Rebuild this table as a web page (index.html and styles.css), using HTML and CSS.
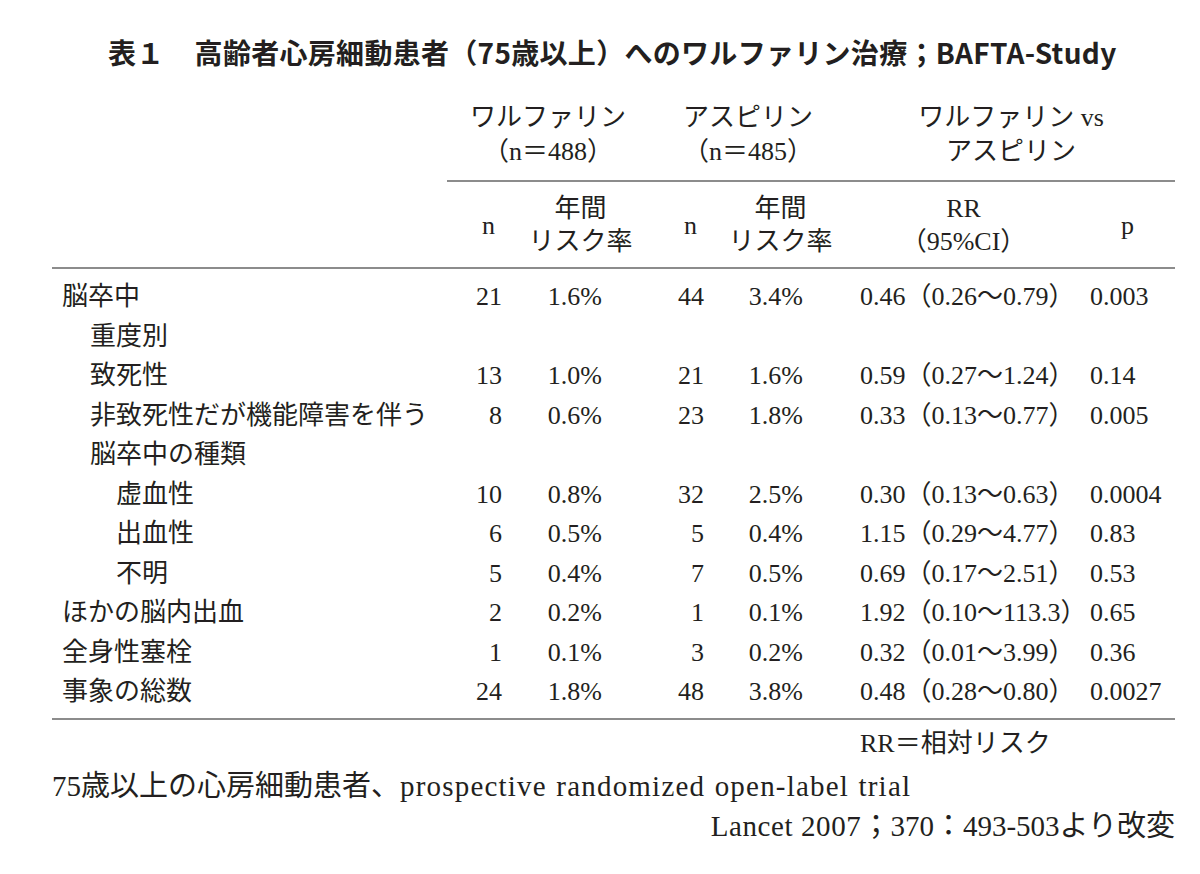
FILE: index.html
```html
<!DOCTYPE html>
<html lang="ja">
<head>
<meta charset="utf-8">
<title>表1 BAFTA-Study</title>
<link rel="stylesheet" href="styles.css">
</head>
<body>
<div class="page">
  <h1 class="title"><span class="tno">表１</span>高齢者心房細動患者（75歳以上）へのワルファリン治療；BAFTA-Study</h1>
  <table class="tbl">
    <colgroup>
      <col class="c-label">
      <col class="c-n1">
      <col class="c-r1">
      <col class="c-n2">
      <col class="c-r2">
      <col class="c-rr">
      <col class="c-p">
    </colgroup>
    <thead>
      <tr class="grp">
        <th class="blank"></th>
        <th colspan="2" class="g">ワルファリン<br>（n＝488）</th>
        <th colspan="2" class="g">アスピリン<br>（n＝485）</th>
        <th colspan="2" class="g">ワルファリン vs<br>アスピリン</th>
      </tr>
      <tr class="sub">
        <th></th>
        <th class="hn">n</th>
        <th class="hc">年間<br>リスク率</th>
        <th class="hn">n</th>
        <th class="hc">年間<br>リスク率</th>
        <th class="hrr">RR<br>（95%CI）</th>
        <th class="hp">p</th>
      </tr>
    </thead>
    <tbody>
      <tr class="first"><td class="l0">脳卒中</td><td class="n">21</td><td class="r">1.6%</td><td class="n">44</td><td class="r2">3.4%</td><td class="rr">0.46（0.26〜0.79）</td><td class="p">0.003</td></tr>
      <tr><td class="l1">重度別</td><td></td><td></td><td></td><td></td><td></td><td></td></tr>
      <tr><td class="l1">致死性</td><td class="n">13</td><td class="r">1.0%</td><td class="n">21</td><td class="r2">1.6%</td><td class="rr">0.59（0.27〜1.24）</td><td class="p">0.14</td></tr>
      <tr><td class="l1">非致死性だが機能障害を伴う</td><td class="n">8</td><td class="r">0.6%</td><td class="n">23</td><td class="r2">1.8%</td><td class="rr">0.33（0.13〜0.77）</td><td class="p">0.005</td></tr>
      <tr><td class="l1">脳卒中の種類</td><td></td><td></td><td></td><td></td><td></td><td></td></tr>
      <tr><td class="l2">虚血性</td><td class="n">10</td><td class="r">0.8%</td><td class="n">32</td><td class="r2">2.5%</td><td class="rr">0.30（0.13〜0.63）</td><td class="p">0.0004</td></tr>
      <tr><td class="l2">出血性</td><td class="n">6</td><td class="r">0.5%</td><td class="n">5</td><td class="r2">0.4%</td><td class="rr">1.15（0.29〜4.77）</td><td class="p">0.83</td></tr>
      <tr><td class="l2">不明</td><td class="n">5</td><td class="r">0.4%</td><td class="n">7</td><td class="r2">0.5%</td><td class="rr">0.69（0.17〜2.51）</td><td class="p">0.53</td></tr>
      <tr><td class="l0">ほかの脳内出血</td><td class="n">2</td><td class="r">0.2%</td><td class="n">1</td><td class="r2">0.1%</td><td class="rr">1.92（0.10〜113.3）</td><td class="p">0.65</td></tr>
      <tr><td class="l0">全身性塞栓</td><td class="n">1</td><td class="r">0.1%</td><td class="n">3</td><td class="r2">0.2%</td><td class="rr">0.32（0.01〜3.99）</td><td class="p">0.36</td></tr>
      <tr class="last"><td class="l0">事象の総数</td><td class="n">24</td><td class="r">1.8%</td><td class="n">48</td><td class="r2">3.8%</td><td class="rr">0.48（0.28〜0.80）</td><td class="p">0.0027</td></tr>
    </tbody>
    <tfoot>
      <tr><td colspan="5"></td><td colspan="2" class="note">RR＝相対リスク</td></tr>
    </tfoot>
  </table>
  <p class="foot1">75歳以上の心房細動患者、<span class="lat">prospective randomized open-label trial</span></p>
  <p class="foot2"><span class="lat2">Lancet 2007</span>；370：493-503より改変</p>
</div>
</body>
</html>
```
FILE: styles.css
```css
html, body {
  margin: 0;
  padding: 0;
  background: #ffffff;
}

.page {
  width: 1123px;
  padding: 32px 0 0 52px;
  color: #231f20;
  font-family: "Liberation Serif", "Noto Sans CJK JP", serif;
  font-size: 26px;
  font-weight: 400;
}

.title {
  margin: 0 0 0 56px;
  font-family: "Noto Sans CJK JP", sans-serif;
  font-weight: 700;
  font-size: 28px;
  line-height: 40px;
  white-space: nowrap;
  letter-spacing: 0.3px;
}

.tno {
  margin-right: 30px;
}

.tbl {
  margin-top: 29px;
  width: 1123px;
  border-collapse: collapse;
  table-layout: fixed;
}

.c-label { width: 395px; }
.c-n1 { width: 65px; }
.c-r1 { width: 137px; }
.c-n2 { width: 65px; }
.c-r2 { width: 133px; }
.c-rr { width: 233px; }
.c-p { width: 95px; }

.tbl th {
  font-weight: 400;
  padding: 0;
}

.grp th {
  line-height: 34px;
  padding-bottom: 11px;
  text-align: center;
  vertical-align: bottom;
}

.grp th.g {
  border-bottom: 2px solid #8c8c8c;
}

.sub th {
  line-height: 33px;
  padding-top: 10px;
  padding-bottom: 9px;
  border-bottom: 2px solid #8c8c8c;
  vertical-align: middle;
}

.sub th.hn {
  text-align: right;
  padding-right: 17px;
}

.sub th.hc,
.sub th.hrr,
.sub th.hp {
  text-align: center;
}

.tbl td {
  padding: 0;
  line-height: 39.5px;
  white-space: nowrap;
}

.tbl tr.first td {
  padding-top: 8px;
}

.tbl tr.last td {
  padding-bottom: 6px;
  border-bottom: 2px solid #8c8c8c;
}

.tbl td.l0 { padding-left: 10px; }
.tbl td.l1 { padding-left: 38px; }
.tbl td.l2 { padding-left: 64px; }

.tbl td.n {
  text-align: right;
  padding-right: 10px;
}

.tbl td.r {
  text-align: right;
  padding-right: 47px;
}

.tbl td.r2 {
  text-align: right;
  padding-right: 44px;
}

.tbl td.rr {
  padding-left: 13px;
}

.tbl td.p {
  padding-left: 10px;
}

.tbl tfoot td {
  line-height: 40px;
  padding-top: 4px;
}

.tbl td.note {
  padding-left: 13px;
}

.lat {
  letter-spacing: 1.2px;
  word-spacing: 1px;
}

.lat2 {
  letter-spacing: 0.6px;
}

.foot1 {
  margin: 2px 0 0 0;
  font-size: 29px;
  line-height: 40px;
  white-space: nowrap;
}

.foot2 {
  margin: 0;
  font-size: 29px;
  line-height: 40px;
  text-align: right;
  white-space: nowrap;
}
```
